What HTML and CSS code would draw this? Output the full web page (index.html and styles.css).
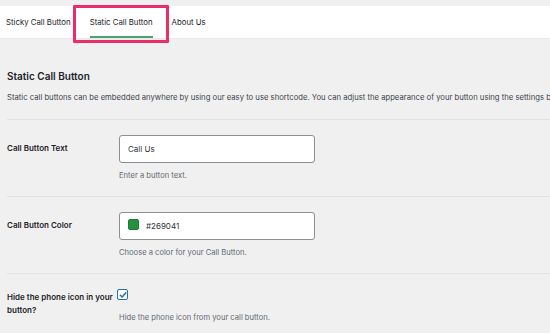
FILE: index.html
```html
<!DOCTYPE html>
<html lang="en">
<head>
    <meta charset="UTF-8">
    <meta name="viewport" content="width=device-width, initial-scale=1.0">
    <title>Static Call Button</title>
    <link rel="stylesheet" href="styles.css">
</head>
<body>
    <div class="top-strip"></div>
    <nav class="tabs">
        <a class="tab">Sticky Call Button</a>
        <a class="tab active">Static Call Button<span class="highlight"></span></a>
        <a class="tab">About Us</a>
    </nav>

    <div class="content">
        <h2 class="title">Static Call Button</h2>
        <p class="intro">Static call buttons can be embedded anywhere by using our easy to use shortcode. You can adjust the appearance of your button using the settings below.</p>

        <div class="row">
            <div class="label">Call Button Text</div>
            <div class="field">
                <div class="input">Call Us</div>
                <p class="help">Enter a button text.</p>
            </div>
        </div>

        <div class="row">
            <div class="label">Call Button Color</div>
            <div class="field">
                <div class="input"><span class="swatch"></span>#269041</div>
                <p class="help">Choose a color for your Call Button.</p>
            </div>
        </div>

        <div class="row last">
            <div class="label">Hide the phone icon in your button?</div>
            <div class="field">
                <span class="checkbox">
                    <svg width="8" height="8" viewBox="0 0 8 8"><path d="M1.3 4.2 L3.2 6 L6.8 1.8" fill="none" stroke="#2271b1" stroke-width="1.5" stroke-linecap="round" stroke-linejoin="round"/></svg>
                </span>
                <p class="help">Hide the phone icon from your call button.</p>
            </div>
        </div>
    </div>
</body>
</html>
```

FILE: styles.css
```css
body {
    margin: 0;
    background: #f0f0f1;
    font-family: Inter, 'Liberation Sans', Arial, sans-serif;
    color: #1d2327;
    overflow: hidden;
}
.top-strip {
    height: 6px;
    background: #f0f0f1;
}
.tabs {
    display: flex;
    height: 32px;
    background: #fff;
    border-bottom: 1px solid #e8e8e8;
    padding-left: 6px;
    gap: 19px;
}
.tab {
    position: relative;
    display: flex;
    align-items: center;
    font-size: 7.8px;
    color: #1d2327;
    white-space: nowrap;
}
.tab.active {
    box-shadow: inset 0 -2px 0 #4ca56a;
}
.highlight {
    position: absolute;
    left: -17px;
    right: -16px;
    top: -1px;
    bottom: -5px;
    border: 3px solid #ea2e6a;
    border-radius: 1px;
}
.content {
    padding: 0 0 0 7px;
}
.title {
    margin: 0;
    padding-top: 29px;
    font-size: 10px;
    font-weight: 600;
    line-height: 16px;
}
.intro {
    margin: 8px 0 0;
    font-size: 7.7px;
    line-height: 12px;
    color: #3c434a;
    white-space: nowrap;
    overflow: hidden;
    padding-bottom: 15px;
    border-bottom: 1px solid #e3e3e4;
}
.row {
    display: grid;
    grid-template-columns: 112px 196px;
    padding: 15px 0 14px;
    border-bottom: 1px solid #e3e3e4;
}
.row.last {
    border-bottom: none;
}
.label {
    font-size: 8px;
    font-weight: 600;
    line-height: 13px;
    padding-top: 7px;
    padding-right: 6px;
}
.row.last .label {
    padding-top: 2px;
}
.input {
    display: flex;
    align-items: center;
    gap: 7px;
    height: 26px;
    padding: 0 8px;
    background: #fff;
    border: 1px solid #8c8f94;
    border-radius: 3px;
    font-size: 8px;
    color: #2c3338;
}
.swatch {
    width: 9px;
    height: 9px;
    background: #269041;
    border: 1px solid #1e7a36;
    border-radius: 2px;
    margin-top: -3px;
}
.help {
    margin: 7px 0 0;
    font-size: 7.6px;
    line-height: 12px;
    color: #646970;
}
.checkbox {
    display: flex;
    align-items: center;
    justify-content: center;
    width: 9px;
    height: 9px;
    border: 1.5px solid #2271b1;
    border-radius: 2px;
    background: #fff;
    margin-left: -2px;
}
.row.last .help {
    margin-top: 12px;
}
```
